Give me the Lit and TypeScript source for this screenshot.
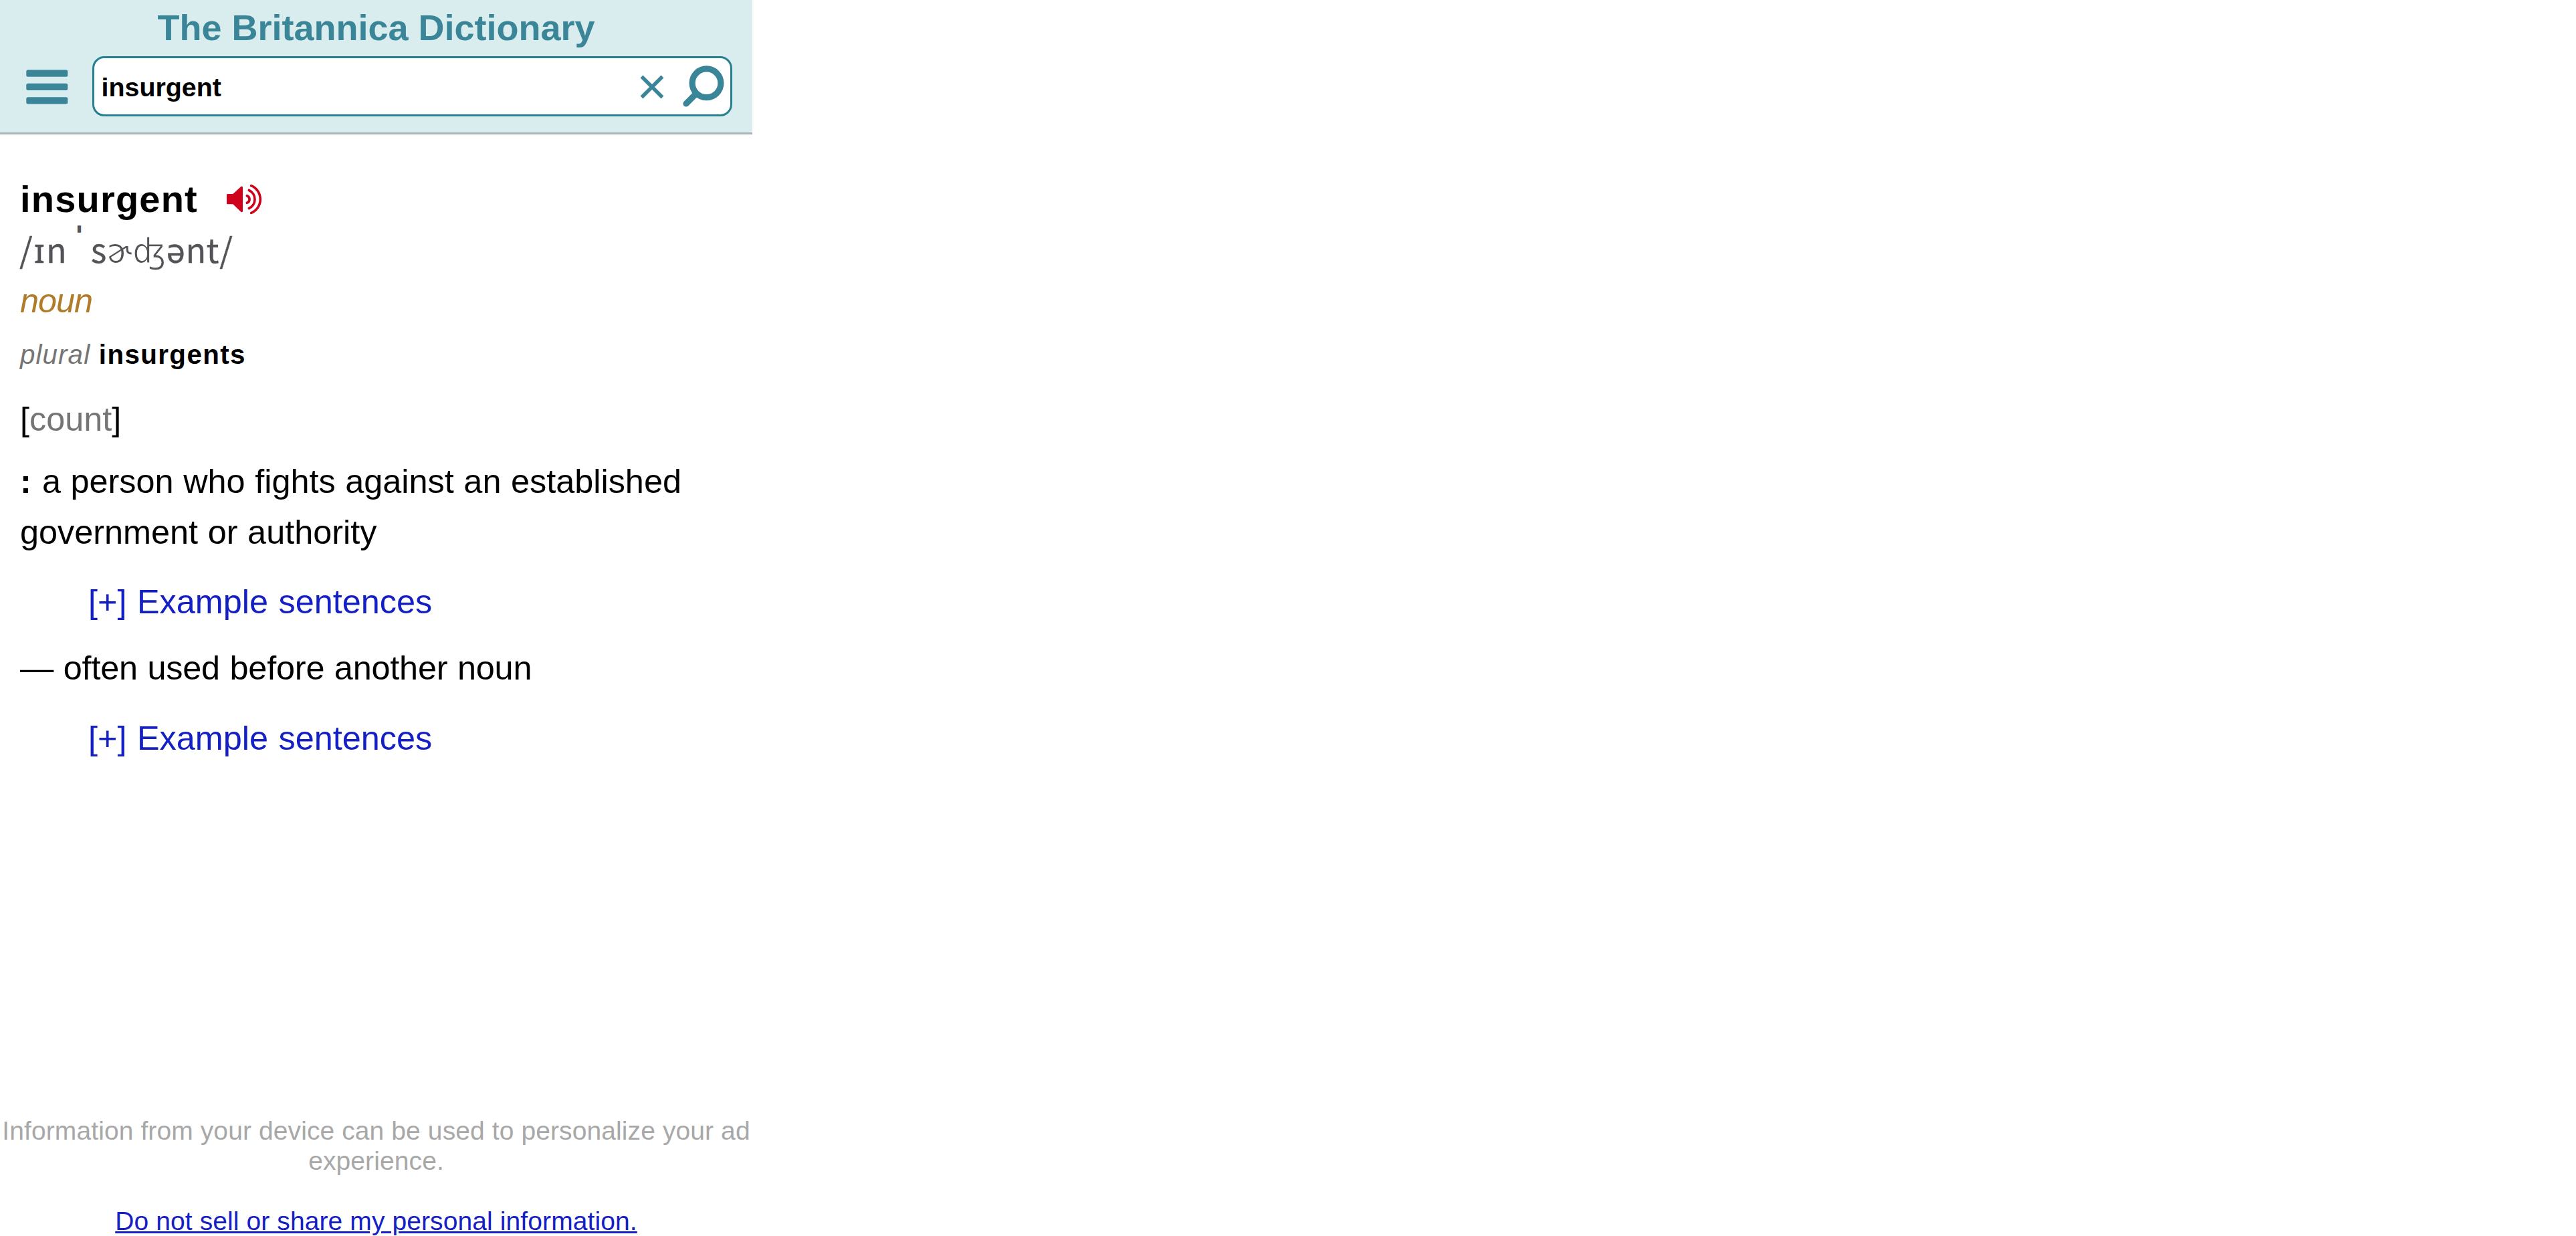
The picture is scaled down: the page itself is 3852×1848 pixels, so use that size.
import { LitElement, html, css } from 'lit';
import { customElement, property } from 'lit/decorators.js';

@customElement('dict-header')
export class DictHeader extends LitElement {
  static styles = css`
    :host {
      display: block;
      padding: 10px 30px 24px 39px;
      background: #d9ecee;
      border-bottom: 3px solid #acb3b5;
      color: #3a8597;
    }

    .title {
      margin: 0 -30px 12px -39px;
      font-size: 54px;
      font-weight: bold;
      line-height: 62px;
      text-align: center;
    }

    .row {
      display: flex;
      align-items: center;
      gap: 36px;
    }

    .menu {
      display: block;
      width: 63px;
      height: 52px;
      margin-top: 2px;
      fill: currentColor;
    }

    .search {
      flex: 1;
      display: flex;
      align-items: center;
      box-sizing: border-box;
      height: 90px;
      padding: 0 9px 0 10.5px;
      background: #fff;
      border: 3px solid #278090;
      border-radius: 18px;
    }

    .term {
      flex: 1;
      padding-top: 2px;
      color: #000;
      font-size: 39.4px;
      font-weight: bold;
      line-height: 45px;
    }

    .clear {
      width: 36px;
      height: 36px;
      margin: 1px 28px 0 0;
      fill: none;
      stroke: currentColor;
      stroke-width: 5.4;
    }

    .find {
      width: 62px;
      height: 62px;
      fill: none;
      stroke: currentColor;
      stroke-width: 9.2;
      stroke-linecap: round;
    }
  `;

  @property({ type: String }) heading = '';
  @property({ type: String }) term = '';

  render() {
    return html`
      <div class="title">${this.heading}</div>
      <div class="row">
        <svg class="menu" viewBox="0 0 63 52">
          <rect x="0.300" y="0.500" width="62" height="10.300" rx="2.500" />
          <rect x="0.300" y="20.800" width="62" height="10.300" rx="2.500" />
          <rect x="0.300" y="41.200" width="62" height="10.300" rx="2.500" />
        </svg>
        <div class="search">
          <span class="term">${this.term}</span>
          <svg class="clear" viewBox="0 0 36 36">
            <path d="M2.500 2.500l31 31M33.500 2.500l-31 31" />
          </svg>
          <svg class="find" viewBox="0 0 62 62">
            <circle cx="35.500" cy="26.300" r="21.400" />
            <path d="M20 42L5 57" />
          </svg>
        </div>
      </div>
    `;
  }
}

@customElement('dict-entry')
export class DictEntry extends LitElement {
  static styles = css`
    :host {
      display: block;
      padding: 59px 30px 0;
      font-size: 50.4px;
      line-height: 75.6px;
    }

    p {
      margin: 0;
    }

    .head {
      display: flex;
      align-items: center;
      gap: 43px;
      font-size: 56px;
      font-weight: bold;
      letter-spacing: 1.2px;
    }

    .speaker {
      width: 53px;
      height: 46px;
      color: #d0021b;
    }

    .pron {
      height: 75px;
      margin-top: 2.4px;
      color: #535358;
      white-space: nowrap;
    }

    .ipa {
      font-family: "Noto Sans CJK SC", sans-serif;
      line-height: 0;
      letter-spacing: 0.2px;
      -webkit-text-stroke: 0.3px currentColor;
    }

    .wide {
      margin-left: -1px;
      letter-spacing: 2px;
    }

    .vowel {
      font-family: "Noto Sans", sans-serif;
    }

    .stress {
      display: inline-block;
      width: 34px;
      font-family: "Noto Sans", sans-serif;
      font-size: 31px;
      font-weight: 900;
      text-align: center;
      vertical-align: 30px;
      -webkit-text-stroke: 1.6px currentColor;
    }

    .thin {
      font-family: "DejaVu Sans Condensed", "DejaVu Sans", sans-serif;
      font-size: 51.5px;
      letter-spacing: 1.2px;
      -webkit-text-stroke: 1.1px #fff;
    }

    .pos {
      margin-top: -0.8px;
      color: #b17c2a;
      font-style: italic;
      letter-spacing: -1px;
    }

    .forms {
      margin-top: 12.7px;
      font-size: 40.32px;
      line-height: 60.5px;
      letter-spacing: 1.4px;
    }

    .forms i {
      letter-spacing: 1.1px;
    }

    .forms i,
    .gram span {
      color: #757575;
    }

    .gram {
      margin-top: 28px;
    }

    .def {
      margin-top: 17.5px;
      word-spacing: 0.6px;
    }

    .def b {
      margin-right: 1.5px;
    }

    .usage {
      margin-top: 23.4px;
      letter-spacing: -0.2px;
      word-spacing: 0.8px;
    }

    .examples {
      margin-top: 29px;
      padding-left: 102px;
      color: #1420c4;
      word-spacing: 1.5px;
    }
  `;

  private renderExamples() {
    return html`<p class="examples">[+] Example sentences</p>`;
  }

  render() {
    return html`
      <p class="head">
        insurgent
        <svg class="speaker" viewBox="0 0 159 138">
          <path
            d="M4 45h24L64 12q8-5 8 4v105q0 9-8 4L28 91H4q-4 0-4-4V49q0-4 4-4z"
            fill="currentColor"
          />
          <g fill="none" stroke="currentColor" stroke-width="11" stroke-linecap="round">
            <path d="M91 53a17 17 0 0 1 0 32" />
            <path d="M100 28.500a44.500 44.500 0 0 1 0 81" />
            <path d="M110 8a66 66 0 0 1 0 122" />
          </g>
        </svg>
      </p>
      <p class="pron"><span class="ipa"><span class="wide">/<span class="vowel">ɪ</span>n</span><span class="stress">ˈ</span>s<span class="thin">ɚʤ</span><span class="vowel">ə</span>nt/</span></p>
      <p class="pos">noun</p>
      <p class="forms"><i>plural</i> <b>insurgents</b></p>
      <p class="gram">[<span>count</span>]</p>
      <p class="def"><b>:</b> a person who fights against an established government or authority</p>
      ${this.renderExamples()}
      <p class="usage">— often used before another noun</p>
      ${this.renderExamples()}
    `;
  }
}

@customElement('app-root')
export class AppRoot extends LitElement {
  static styles = css`
    :host {
      display: flex;
      flex-direction: column;
      width: 1125px;
      height: 1848px;
      background: #fff;
      color: #000;
      font-family: "Liberation Sans", Arial, sans-serif;
    }

    footer {
      margin-top: auto;
      color: #a8a8a8;
      font-size: 39px;
      line-height: 45px;
      text-align: center;
    }

    footer p {
      margin: 0 0 45px;
    }

    footer .notice {
      letter-spacing: 0.1px;
    }

    footer a {
      display: block;
      color: #1420c4;
      letter-spacing: 0.1px;
      text-decoration: underline;
    }
  `;

  render() {
    return html`
      <dict-header heading="The Britannica Dictionary" term="insurgent"></dict-header>
      <dict-entry></dict-entry>
      <footer>
        <p class="notice">Information from your device can be used to personalize your ad experience.</p>
        <a>Do not sell or share my personal information.</a>
      </footer>
    `;
  }
}
